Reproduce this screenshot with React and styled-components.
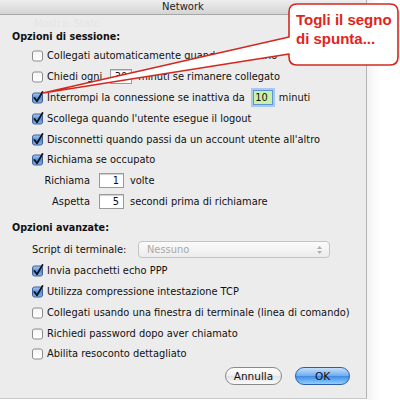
import React from 'react'
import styled, { createGlobalStyle } from 'styled-components'

const GlobalStyle = createGlobalStyle`
  body {
    margin: 0;
    background: #ffffff;
  }
`

const sessionOptions = [
  { label: 'Collegati automaticamente quando necessario', checked: false },
  { label: 'Chiedi ogni', checked: false, after: 'minuti se rimanere collegato', value: '30' },
  { label: 'Interrompi la connessione se inattiva da', checked: true, after: 'minuti', value: '10', focus: true },
  { label: "Scollega quando l'utente esegue il logout", checked: true },
  { label: "Disconnetti quando passi da un account utente all'altro", checked: true },
  { label: 'Richiama se occupato', checked: true }
]

const advancedOptions = [
  { label: 'Invia pacchetti echo PPP', checked: true },
  { label: 'Utilizza compressione intestazione TCP', checked: true },
  { label: 'Collegati usando una finestra di terminale (linea di comando)', checked: false },
  { label: 'Richiedi password dopo aver chiamato', checked: false },
  { label: 'Abilita resoconto dettagliato', checked: false }
]

const CheckBox = ({ checked }) => (
  <BoxSvg width='13' height='13' viewBox='0 0 13 13'>
    <defs>
      <linearGradient id='blueBox' x1='0' y1='0' x2='0' y2='1'>
        <stop offset='0' stopColor='#a9cdf5' />
        <stop offset='0.5' stopColor='#4f8fe0' />
        <stop offset='1' stopColor='#7fb4f0' />
      </linearGradient>
      <linearGradient id='whiteBox' x1='0' y1='0' x2='0' y2='1'>
        <stop offset='0' stopColor='#f4f4f4' />
        <stop offset='1' stopColor='#ffffff' />
      </linearGradient>
    </defs>
    <rect
      x='1.5'
      y='2'
      width='10'
      height='10'
      rx='2'
      fill={checked ? 'url(#blueBox)' : 'url(#whiteBox)'}
      stroke={checked ? '#3e5f93' : '#8c8c8c'}
      strokeWidth='1'
    />
    {checked && (
      <path d='M3.5 7 L6 10.3 L11.5 1' fill='none' stroke='#111' strokeWidth='1.8' strokeLinecap='round' strokeLinejoin='round' />
    )}
  </BoxSvg>
)

const CheckRow = ({ item }) => (
  <Row>
    <CheckBox checked={item.checked} />
    <Label>{item.label}</Label>
    {item.value && (
      <>
        <NumField $focus={item.focus} $width={item.focus ? 20 : 22}>{item.value}</NumField>
        <Label>{item.after}</Label>
      </>
    )}
  </Row>
)

const App = () => {
  return (
    <Screen>
      <GlobalStyle />
      <Window>
        <TitleBar>Network</TitleBar>
        <Content>
          <Ghost>Mostra: Stato</Ghost>
          <Heading>Opzioni di sessione:</Heading>
          <List>
            {sessionOptions.map(item => (
              <CheckRow key={item.label} item={item} />
            ))}
            <Row>
              <FieldLabel>Richiama</FieldLabel>
              <NumField $width={25}>1</NumField>
              <Label>volte</Label>
            </Row>
            <Row>
              <FieldLabel>Aspetta</FieldLabel>
              <NumField $width={25}>5</NumField>
              <Label>secondi prima di richiamare</Label>
            </Row>
          </List>
          <Heading $top={9}>Opzioni avanzate:</Heading>
          <List $top={4.6}>
            <Row>
              <ScriptLabel>Script di terminale:</ScriptLabel>
              <Popup>
                <span>Nessuno</span>
                <svg width='7' height='10' viewBox='0 0 7 10'>
                  <path d='M1 4 L3.5 1 L6 4 Z M1 6 L3.5 9 L6 6 Z' fill='#b0b0b0' />
                </svg>
              </Popup>
            </Row>
            {advancedOptions.map(item => (
              <CheckRow key={item.label} item={item} />
            ))}
          </List>
          <Buttons>
            <Button>Annulla</Button>
            <Button $primary>OK</Button>
          </Buttons>
        </Content>
      </Window>
      <Side />
      <Callout>
        <svg width='400' height='100' viewBox='0 0 400 100'>
          <path
            d='M43 93 L289 37 L289 12 Q289 4 297 4 L390 4 Q398 4 398 12 L398 57 Q398 65 390 65 L297 65 Q289 65 289 57 L289 54 Z'
            fill='#ffffff'
            stroke='#d3281f'
            strokeWidth='1.6'
            strokeLinejoin='round'
          />
        </svg>
        <CalloutText>
          Togli il segno
          <br />
          di spunta...
        </CalloutText>
      </Callout>
    </Screen>
  )
}

export default App

const Screen = styled.div`
  position: relative;
  width: 400px;
  height: 400px;
  overflow: hidden;
  display: flex;
  font-family: 'DejaVu Sans', 'Liberation Sans', sans-serif;
  font-size: 9.85px;
  color: #111;
`

const Window = styled.div`
  width: 366px;
  height: 398px;
  flex-shrink: 0;
  background: #ececec;
  border-right: 1px solid #b4b4b4;
  border-bottom: 1px solid #c8c8c8;
  display: flex;
  flex-direction: column;
`

const Side = styled.div`
  flex: 1;
  background: linear-gradient(to right, #f2f2f2, #ffffff 40%);
`

const TitleBar = styled.div`
  height: 14px;
  background: linear-gradient(#eeeeee, #d4d4d4);
  border-bottom: 1px solid #a8a8a8;
  text-align: center;
  font-size: 10px;
  line-height: 14px;
  color: #222;
`

const Content = styled.div`
  padding-left: 12px;
  display: flex;
  flex-direction: column;
`

const Ghost = styled.div`
  height: 15px;
  line-height: 17px;
  padding-left: 22px;
  color: #e5e5e5;
`

const Heading = styled.div`
  height: 14px;
  line-height: 14px;
  font-weight: bold;
  font-size: 9.6px;
  margin-top: ${p => p.$top || 0}px;
`

const List = styled.div`
  margin-top: ${p => p.$top || 1.6}px;
  padding-left: 19px;
  display: flex;
  flex-direction: column;
`

const Row = styled.div`
  height: 20.8px;
  display: flex;
  align-items: center;
  gap: 2px;
  white-space: nowrap;
`

const BoxSvg = styled.svg`
  flex-shrink: 0;
  margin-right: 1px;
`

const Label = styled.span`
  margin-right: 4px;
`

const FieldLabel = styled.span`
  width: 59px;
  text-align: right;
  margin-right: 5px;
`

const ScriptLabel = styled.span`
  width: 98px;
  margin-left: 1px;
  margin-right: 6px;
`

const NumField = styled.span`
  width: ${p => p.$width}px;
  height: 15px;
  box-sizing: border-box;
  padding-right: 4px;
  text-align: right;
  line-height: 13px;
  background: ${p => (p.$focus ? '#c9f2a9' : '#ffffff')};
  border: 1px solid ${p => (p.$focus ? '#5f93d6' : '#9a9a9a')};
  box-shadow: ${p => (p.$focus ? '0 0 0 2px #a9c8ee' : 'inset 0 1px 1px #d0d0d0')};
  margin: 0 4px 0 2px;
`

const Popup = styled.div`
  width: 192px;
  height: 17px;
  box-sizing: border-box;
  border: 1px solid #c4c4c4;
  border-radius: 4px;
  background: linear-gradient(#fbfbfb, #ececec);
  display: flex;
  align-items: center;
  justify-content: space-between;
  padding: 0 6px 0 8px;
  color: #a8a8a8;
`

const Buttons = styled.div`
  margin-top: 3px;
  height: 19px;
  display: flex;
  justify-content: flex-end;
  gap: 13px;
  padding-right: 16px;
`

const Button = styled.div`
  width: ${p => (p.$primary ? 55 : 57)}px;
  height: 18px;
  box-sizing: border-box;
  border-radius: 9px;
  border: 1px solid ${p => (p.$primary ? '#2c5fa8' : '#8a8a8a')};
  background: ${p =>
    p.$primary
      ? 'linear-gradient(#c4e0fb, #6eabef 50%, #3f8ae6 51%, #8fd0fb)'
      : 'linear-gradient(#ffffff, #efefef 50%, #e2e2e2 51%, #fbfbfb)'};
  display: flex;
  align-items: center;
  justify-content: center;
  font-size: 10.5px;
  color: #111;
`

const Callout = styled.div`
  position: absolute;
  left: 0;
  top: 0;
  width: 400px;
  height: 100px;
`

const CalloutText = styled.div`
  position: absolute;
  left: 296px;
  top: 10px;
  font-family: 'Liberation Sans', Arial, sans-serif;
  font-weight: bold;
  font-size: 15px;
  line-height: 19px;
  color: #e3231b;
`
